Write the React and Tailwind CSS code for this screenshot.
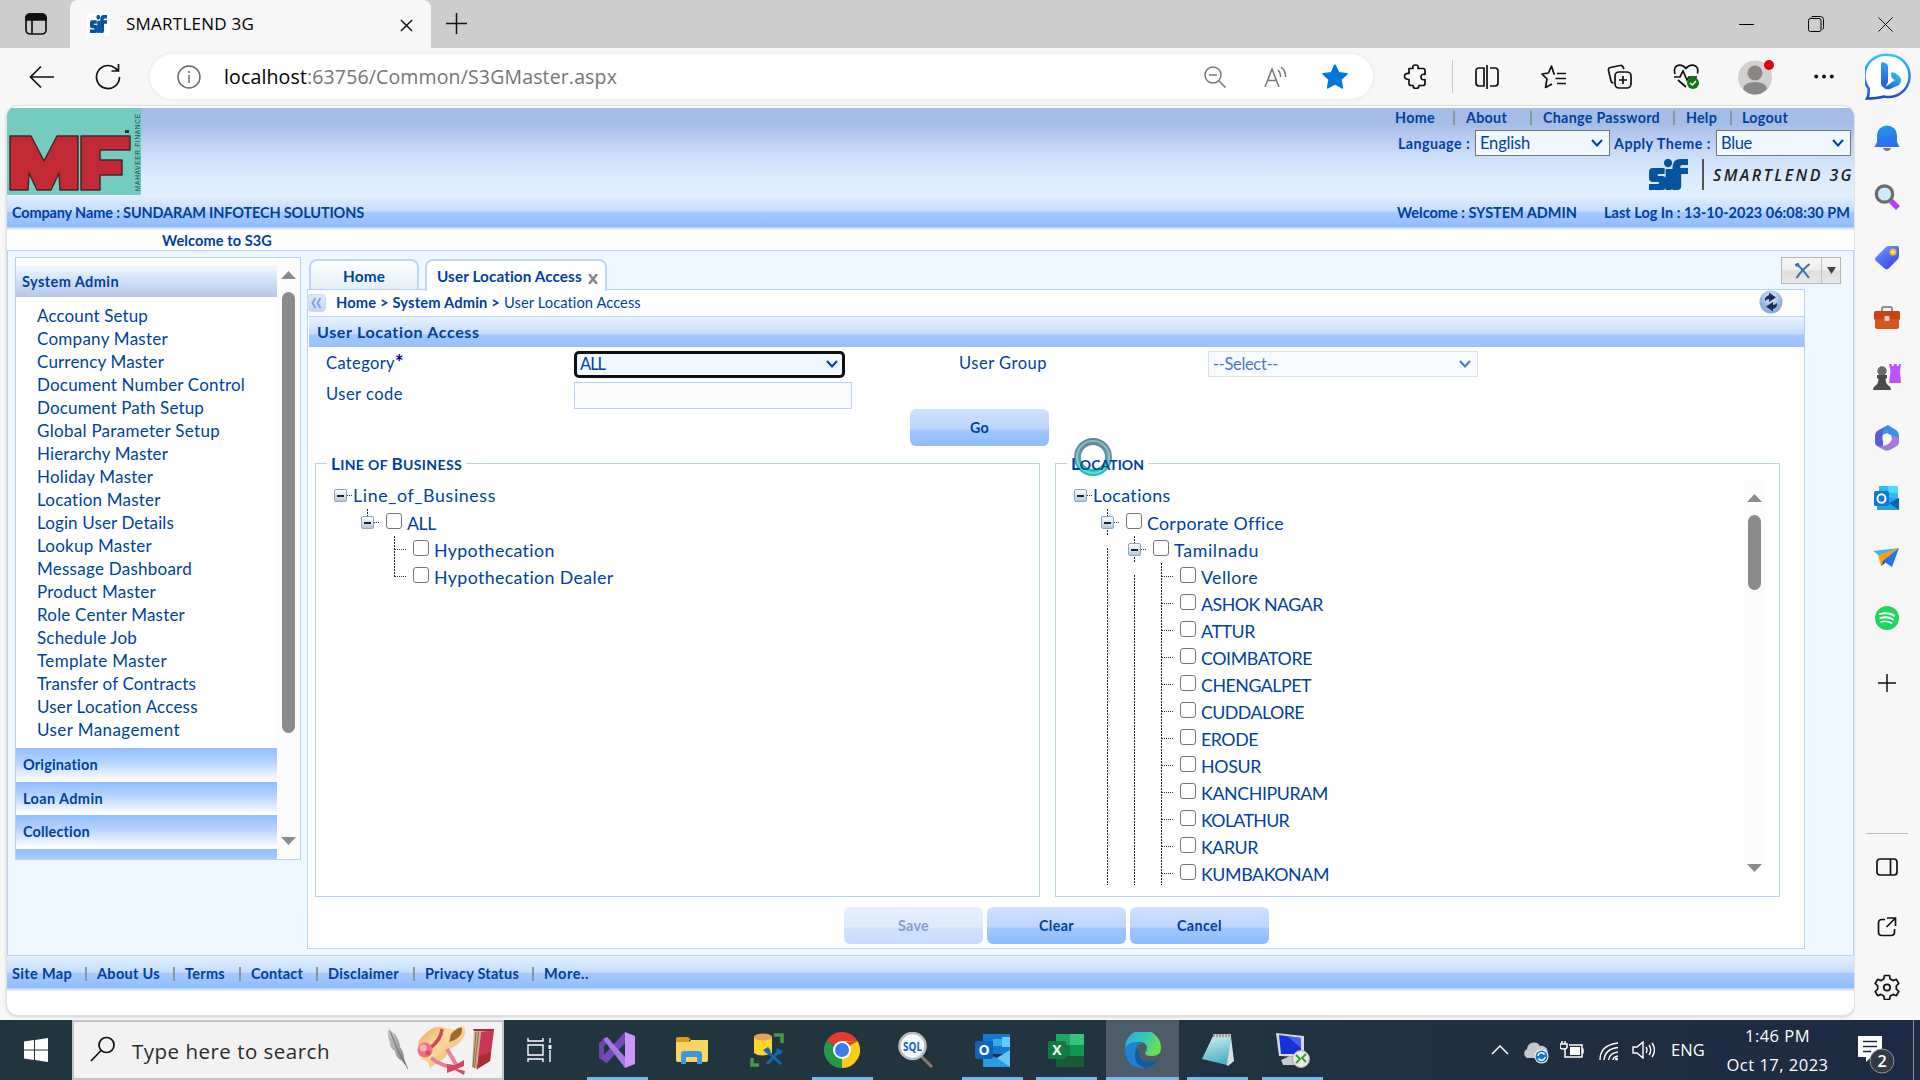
import React, { useLayoutEffect, useRef, useState } from "react";

/* Text run that is tracked so that it fills a given width. */
function T({ w, className = "", children }) {
  const ref = useRef(null);
  const [ls, setLs] = useState(0);
  useLayoutEffect(() => {
    const el = ref.current;
    const n = el.textContent.length;
    setLs((w - el.getBoundingClientRect().width) / n);
  }, []);
  return (
    <span className={`block shrink-0 whitespace-pre ${className}`} style={{ width: w }}>
      <span ref={ref} style={{ letterSpacing: ls }}>{children}</span>
    </span>
  );
}

const bar = "bg-[linear-gradient(#e3efff_0%,#c4dcfd_46%,#a6c9ff_50%,#90bdff_90%,#e6f0ff_97%)]";
const btn = "bg-[linear-gradient(#cfe1ff_0%,#bdd6fc_54%,#a3c7fe_57%,#8dbcff_100%)]";

/* ---------- browser chrome ---------- */
function SfMark({ className }) {
  return (
    <svg viewBox="0 0 40 31" className={className} preserveAspectRatio="none" fill="#05539f">
      <path d="M4 9h12v6H9v2h4q5 0 5 5v4q0 5-5 5H0v-6h10v-2H4q-4 0-4-4v-6q0-4 4-4z" />
      <path d="M17 10h8v17q0 4-4 4h-4z" />
      <circle cx="19.500" cy="4" r="4.200" />
      <path d="M24 9q0-9 8-9h8v6h-6q-2 0-2 2v1h8v6h-7v12q0 4-4 4h-5z" />
    </svg>
  );
}

function TabStrip() {
  return (
    <div className="flex h-[48px] bg-[#cdcdcd] text-black">
      <div className="flex w-[70px] items-center pl-[25px]">
        <svg width="22" height="22" viewBox="0 0 22 22" fill="none" stroke="#111" strokeWidth="1.700">
          <rect x="1" y="1" width="20" height="20" rx="4" />
          <path d="M1 7V5a4 4 0 0 1 4-4h12a4 4 0 0 1 4 4v2z" fill="#111" />
          <path d="M7 7v14" />
        </svg>
      </div>
      <div className="flex h-[48px] w-[361px] items-center rounded-t-[8px] bg-[#f7f7f7] pl-[17px]">
        <div className="flex h-[23px] w-[23px] items-center justify-center bg-white">
          <SfMark className="h-[18px] w-[17px]" />
        </div>
        <T w={128} className="ml-[16px] font-['Open_Sans'] text-[17px]">SMARTLEND 3G</T>
        <svg className="ml-[146px] mt-[2px]" width="13" height="13" viewBox="0 0 14 14" stroke="#111" strokeWidth="1.600"><path d="M1 1l12 12M13 1L1 13" /></svg>
      </div>
      <svg className="ml-[15px] mt-[13px]" width="21" height="21" viewBox="0 0 21 21" stroke="#111" strokeWidth="1.500"><path d="M10.500 0v21M0 10.500h21" /></svg>
      <div className="ml-auto mr-[27px] flex items-center gap-[54px]">
        <svg width="15" height="16" viewBox="0 0 15 16" stroke="#000"><path d="M0 8.500h15" /></svg>
        <svg width="16" height="16" viewBox="0 0 16 16" fill="none" stroke="#000"><rect x=".5" y="2.500" width="12.500" height="13" rx="2" /><path d="M3 1.500q.5-1 2-1h7.500q3 0 3 3v8q0 1.500-1 2" /></svg>
        <svg width="15" height="15" viewBox="0 0 16 16" stroke="#000"><path d="M.5.5l15 15M15.500.5l-15 15" /></svg>
      </div>
    </div>
  );
}

function Toolbar() {
  return (
    <div className="flex h-[57px] items-start bg-[#f7f7f7] pt-[6px]">
      <div className="flex h-[45px] w-[150px] items-center pl-[29px]">
        <svg width="26" height="24" viewBox="0 0 26 24" fill="none" stroke="#111" strokeWidth="1.700"><path d="M25 12H1.500M12 1.500L1.500 12L12 22.500" /></svg>
        <svg className="ml-[40px]" width="26" height="26" viewBox="0 0 26 26" fill="none" stroke="#111" strokeWidth="1.700"><path d="M24.500 13a11.500 11.500 0 1 1-4-8.700L23 6.500M23.500 0v7h-7" /></svg>
      </div>
      <div className="flex h-[45px] w-[1223px] items-center rounded-full bg-white pl-[27px] shadow-[0_0_4px_rgba(0,0,0,0.08)]">
        <svg width="24" height="24" viewBox="0 0 24 24" fill="none" stroke="#6b6b6b" strokeWidth="1.500"><circle cx="12" cy="12" r="11" /><path d="M12 10v8M12 6v2" /></svg>
        <div className="ml-[23px] flex font-['Open_Sans'] text-[19.500px]">
          <T w={83} className="text-black">localhost</T>
          <T w={310} className="text-[#757575]">:63756/Common/S3GMaster.aspx</T>
        </div>
        <svg className="ml-[587px]" width="22" height="22" viewBox="0 0 22 22" fill="none" stroke="#757575" strokeWidth="1.500"><circle cx="9" cy="9" r="8" /><path d="M15 15l6.500 6.500M5 9h8" /></svg>
        <svg className="ml-[38px]" width="24" height="22" viewBox="0 0 24 22" fill="none" stroke="#757575" strokeWidth="1.500"><path d="M1 21L8 3l7 18M3.500 14.500h9M14 4q3 3 2.500 7M17 1q5 4 4.500 10" /></svg>
        <svg className="ml-[34px]" width="26" height="25" viewBox="0 0 24 23" fill="#0078d7" stroke="#0078d7" strokeWidth="1.500" strokeLinejoin="round"><path d="M12 1l3.300 7 7.700 1-5.600 5.300L18.800 22 12 18.300 5.200 22l1.400-7.700L1 9l7.700-1z" /></svg>
      </div>
      <div className="flex h-[45px] items-center pl-[30px]">
        <svg width="24" height="25" viewBox="0 0 24 25" fill="none" stroke="#111" strokeWidth="1.700" strokeLinejoin="round"><path d="M6 4.500h4q-1-3.500 2.500-3.500t2.500 3.500h5q2 0 2 2v4q-4-1-4 2.500t4 2.500v4q0 2-2 2h-4q0 3-3 3t-3-3H8q-2 0-2-2v-4q-4.500 0-4.500-3.200T6 9.500z" /></svg>
        <div className="ml-[25px] h-[33px] w-px bg-[#c8c8c8]" />
        <svg className="ml-[22px]" width="24" height="24" viewBox="0 0 24 24" fill="none" stroke="#111" strokeWidth="1.700"><path d="M9 3H4Q1 3 1 6v12q0 3 3 3h5zM15 3h5q3 0 3 3v12q0 3-3 3h-5M12 0v24" /></svg>
        <svg className="ml-[42px]" width="25" height="24" viewBox="0 0 25 24" fill="none" stroke="#111" strokeWidth="1.700" strokeLinejoin="round"><path d="M14 9h-1L10.500 1 7.500 8 1 9l5 5-1.500 8.500L11 19M16 8.500h9M14.500 13.500H25M16 18.500h9" /></svg>
        <svg className="ml-[41px]" width="25" height="25" viewBox="0 0 25 25" fill="none" stroke="#111" strokeWidth="1.700"><rect x="8" y="8" width="16" height="16" rx="4" /><path d="M16 12v8M12 16h8M17 5l-1-2q-1-2-3-1.500L3.500 3.500Q1 4 1.500 6.500L4 17q.5 2 2.500 2" /></svg>
        <svg className="ml-[41px]" width="26" height="25" viewBox="0 0 26 25" fill="none" stroke="#111" strokeWidth="1.700"><path d="M2 10Q0 2 6 1.200 10 .7 13 4.500 16 .7 20 1.200q6 .8 4.500 8.300M1 13h6l3-6 4 9 2-3h8M5 16l8 7" /><circle cx="20" cy="19" r="6" fill="#0e7a0d" stroke="none" /><path d="M17 19l2.500 2 3.500-4" stroke="#fff" strokeWidth="1.500" /></svg>
        <svg className="ml-[39px]" width="36" height="36" viewBox="0 0 36 36"><circle cx="17" cy="18.500" r="17" fill="#d2d0ce" /><circle cx="17" cy="14" r="7.500" fill="#8a8886" /><path d="M5 30q1-7 12-7t12 7q-5 5.500-12 5.500T5 30z" fill="#8a8886" /><circle cx="31" cy="6" r="5" fill="#e3000b" /></svg>
        <svg className="ml-[40px]" width="20" height="5" viewBox="0 0 20 5" fill="#111"><circle cx="2.200" cy="2.500" r="2" /><circle cx="10" cy="2.500" r="2" /><circle cx="17.800" cy="2.500" r="2" /></svg>
      </div>
    </div>
  );
}

/* ---------- Edge sidebar ---------- */
function EdgeRail() {
  const slot = "flex h-[60px] items-center justify-center shrink-0";
  return (
    <div className="flex w-[65px] flex-col bg-[#f7f7f7] pr-[2px]">
      <div className="h-[3px] shrink-0" />
      <div className={slot}>
        <svg width="26" height="30" viewBox="0 0 26 30"><defs><linearGradient id="bell" x2=".3" y2="1"><stop stopColor="#1b9de0" /><stop offset="1" stopColor="#2f6df6" /></linearGradient></defs><path d="M3 19V12a10 9.500 0 0 1 20 0v7l2.500 5H.5z" fill="url(#bell)" /><path d="M9 25h8q-1 3-4 3t-4-3z" fill="#767676" /></svg>
      </div>
      <div className={slot}>
        <svg width="26" height="26" viewBox="0 0 26 26" className="-mt-[2px]"><path d="M17 17l7 7" stroke="#b83df5" strokeWidth="5.500" /><circle cx="10.500" cy="10" r="8.200" fill="#cfeafc" stroke="#6b6b6b" strokeWidth="3.200" /></svg>
      </div>
      <div className={slot}>
        <svg width="26" height="26" viewBox="0 0 26 26"><defs><linearGradient id="tag" x2=".8" y2="1"><stop stopColor="#6fa3ff" /><stop offset="1" stopColor="#3a3fe8" /></linearGradient></defs><path d="M12 2q1-1 3-1h8q2 0 2 2v7q0 2-1 4L14 24q-2 1-4-1L2 16q-2-2 0-4z" fill="url(#tag)" /><circle cx="19" cy="7" r="2.500" fill="#e8e8ff" stroke="#f5c400" strokeWidth="2" /></svg>
      </div>
      <div className={slot}>
        <svg width="28" height="24" viewBox="0 0 28 24"><path d="M9 6V3q0-2 2-2h6q2 0 2 2v3" fill="none" stroke="#8c8c8c" strokeWidth="2" /><rect x="1" y="5" width="26" height="9" rx="1.500" fill="#c9420f" /><path d="M2 13h24v8q0 2-2 2H4q-2 0-2-2z" fill="#d9531c" /><rect x="11.500" y="10" width="5" height="5" rx="1" fill="#d4d4d4" /></svg>
      </div>
      <div className={slot}>
        <svg width="28" height="28" viewBox="0 0 28 28" className="-mt-[2px]"><path d="M16 1h2.800v2h2V1h3v2h2V1H28l-1 7 1 12H16l1.500-12z" fill="#bb55fa" /><circle cx="9" cy="8" r="4.700" fill="#6a6a6a" /><path d="M4 12h10v3l-1.500 1q0 5 3.500 7 2 1 2 4H0q0-3 2-4 3.500-2 3.500-7L4 15z" fill="#4a4a4a" /></svg>
      </div>
      <div className={slot}>
        <svg width="26" height="28" viewBox="0 0 26 28"><path d="M14 1L4 6.500Q1 8.500 1 12v6q0 3 3 4.500l5 2.500V9z" fill="#5b5fd6" /><path d="M14 1l8 5q3 2 3 5v7l-9-5-7-3q-1-5 5-9z" fill="#3d8fea" /><path d="M25 14v4q0 3-3 4.500l-6 3.500q-3 1.500-6 0l-6-3.500q8 0 12-4l3-7z" fill="#a67cda" /><path d="M13 9l4.500 2.500v5L13 19l-4.500-2.500v-5z" fill="#f7f7f7" /></svg>
      </div>
      <div className={slot}>
        <OutlookFlat />
      </div>
      <div className={slot}>
        <svg width="27" height="20" viewBox="0 0 27 20"><path d="M0 3L26 0 8 9z" fill="#3cb6f2" /><path d="M26 0L8 9l1 4 4 2 6 4z" fill="#2275e6" /><path d="M26 0L5 7l3 11 3-6z" fill="#f5a21b" /><path d="M11 12l-3 6 4-3z" fill="#103f91" /></svg>
      </div>
      <div className={slot}>
        <svg width="24" height="24" viewBox="0 0 24 24"><circle cx="12" cy="12" r="12" fill="#1ed760" /><g fill="none" stroke="#fff" strokeLinecap="round"><path d="M5 8q8-2 14 1.500" strokeWidth="2.200" /><path d="M5.500 12q7-2 12.500 1.500" strokeWidth="1.900" /><path d="M6 15.700q6-1.500 10.500 1.500" strokeWidth="1.600" /></g></svg>
      </div>
      <div className="flex h-[70px] shrink-0 items-center justify-center">
        <svg width="18" height="18" viewBox="0 0 18 18" stroke="#111" strokeWidth="1.500"><path d="M9 0v18M0 9h18" /></svg>
      </div>
      <div className="mx-auto mt-[115px] h-px w-[42px] shrink-0 bg-[#bdbdbd]" />
      <div className="mt-[3px] flex h-[60px] shrink-0 items-center justify-center">
        <svg width="22" height="18" viewBox="0 0 22 18" fill="none" stroke="#111" strokeWidth="1.700"><rect x="1" y="1" width="20" height="16" rx="3" /><path d="M14.500 1v16" /></svg>
      </div>
      <div className={slot}>
        <svg width="20" height="20" viewBox="0 0 20 20" fill="none" stroke="#111" strokeWidth="1.700"><path d="M8 2.500H5Q1.500 2.500 1.500 6v9q0 3.500 3.500 3.500h9q3.500 0 3.500-3.500v-3M10 1h8.500v8M18.500 1L9.500 10" /></svg>
      </div>
      <div className={slot}>
        <svg width="26" height="26" viewBox="0 0 26 26" className="-mt-[1px]" fill="none" stroke="#111" strokeWidth="1.700" strokeLinejoin="round"><path d="M10.500 1.500h5l.7 3.500 2.800 1.600 3.400-1.300 2.400 4.200-2.500 2.400v3.200l2.500 2.400-2.400 4.200-3.400-1.300-2.800 1.600-.7 3.500h-5L9.800 22 7 20.400l-3.400 1.300-2.400-4.200 2.500-2.400v-3.200L1.200 9.500l2.400-4.200L7 6.600 9.800 5z" /><circle cx="13" cy="13.500" r="3.200" /></svg>
      </div>
    </div>
  );
}

function OutlookFlat() {
  return (
    <svg width="25" height="24" viewBox="0 0 25 24"><rect x="5" y="0" width="19" height="14" fill="#35b8f1" /><path d="M14 0h10v7H14z" fill="#50d9ff" /><path d="M3 12h22v12H3z" fill="#2a9fe4" /><path d="M15 17l10-5v12z" fill="#0a63b6" /><rect x="0" y="5" width="15" height="15" rx="1.500" fill="#0f78d4" /><ellipse cx="7.500" cy="12.500" rx="4" ry="4.300" fill="none" stroke="#fff" strokeWidth="2" /></svg>
  );
}

function BingBadge() {
  return (
    <svg width="46" height="48" viewBox="0 0 46 48" className="absolute right-[9px] top-[53px]">
      <defs>
        <linearGradient id="ring" x2="0" y2="1"><stop stopColor="#35c6f3" /><stop offset="1" stopColor="#1f49d8" /></linearGradient>
        <linearGradient id="bb" x1="1" y1="0" x2="0" y2="1"><stop stopColor="#37d1df" /><stop offset="1" stopColor="#1d4fd7" /></linearGradient>
        <linearGradient id="bs" x2="0" y2="1"><stop stopColor="#2fa6f2" /><stop offset="1" stopColor="#2057dd" /></linearGradient>
      </defs>
      <path d="M23 2a21 21 0 1 1-4 41.500Q12 45.500 2 45.500q2-3 1.700-10A21 21 0 0 1 23 2z" fill="#fff" stroke="url(#ring)" strokeWidth="2.500" />
      <path d="M16 11q0-3 3-1.500l2 1q2 1 2 3V29l-3 6q-4-1-4-5z" fill="url(#bs)" />
      <path d="M26 21q0-3 4-1l3 2q4 3 3 7-1 3-4 4l-7 3q-4 1-6-1l8-6 3-2-2-1q-2-2-2-5z" fill="url(#bb)" />
    </svg>
  );
}

/* ---------- application ---------- */
const Sep = ({ className }) => <div className={`h-[14px] w-[2px] shrink-0 bg-[#8f949c] ${className}`} />;

const Chevron = ({ className }) => (
  <svg width="12" height="8" viewBox="0 0 12 8" fill="none" stroke="currentColor" strokeWidth="2" className={className}><path d="M1 1l5 5.500L11 1" /></svg>
);

function Header() {
  return (
    <div className="flex h-[87px] shrink-0 justify-between bg-[linear-gradient(#a3bbe5_0%,#a5bde7_18%,#bdd1f2_40%,#cfe2fb_60%,#dcecfe_80%,#deeefe_100%)]">
      <div className="flex h-[87px] w-[134px] bg-[#74cbc0]">
        <svg width="134" height="87" viewBox="0 0 134 87">
          <g fill="#c12a35" stroke="#4b2226" strokeWidth="1.500" strokeLinejoin="round">
            <path d="M3 28h21l13 25 13-25h21v54H53l-1-17-8 17H30l-8-17-1 17H3z" />
            <path d="M74 28h49v14H93v10h22v15H93v15H74z" />
          </g>
          <path d="M118 22h4v3h-4z" fill="#234" />
          <text transform="translate(133 83) rotate(-90)" fontSize="6.500" fill="#23524d" fontFamily="Liberation Sans" textLength="77">MAHAVEER FINANCE</text>
        </svg>
      </div>
      <div className="flex w-[465px] flex-col text-[14.300px] font-bold text-[#003f9d]">
        <div className="flex h-[20px] items-center pl-[6px]">
          <T w={40}>Home</T><Sep className="ml-[18px] mr-[11px]" />
          <T w={41}>About</T><Sep className="ml-[23px] mr-[11px]" />
          <T w={117}>Change Password</T><Sep className="ml-[13px] mr-[11px]" />
          <T w={31}>Help</T><Sep className="ml-[13px] mr-[10px]" />
          <T w={46}>Logout</T>
        </div>
        <div className="mt-[2px] flex h-[26px] items-center pl-[9px]">
          <T w={72} className="mt-[1px]">Language :</T>
          <Select w="w-[135px]" label="English" lw={50} className="ml-[5px] border-[#767676] bg-[#eff7ff]" />
          <T w={97} className="ml-[4px] mt-[1px]">Apply Theme :</T>
          <Select w="w-[135px]" label="Blue" lw={31} className="ml-[5px] border-[#767676] bg-[#eff7ff]" />
        </div>
        <div className="mt-[3px] flex h-[31px] items-center pl-[260px]">
          <SfMark className="h-[31px] w-[40px]" />
          <div className="ml-[14px] h-[31px] w-[2px] bg-[#555]" />
          <T w={141} className="ml-[9px] mt-[1px] font-['Open_Sans'] text-[16px] font-semibold italic text-[#222]">SMARTLEND 3G</T>
        </div>
      </div>
    </div>
  );
}

function Select({ w, label, lw, className }) {
  return (
    <div className={`flex h-[26px] shrink-0 items-center justify-between border pl-[4px] pr-[6px] text-[16.500px] font-normal text-[#003f9d] ${w} ${className}`}>
      <T w={lw} className="mt-px">{label}</T>
      <Chevron />
    </div>
  );
}

const MENU = [
  ["Account Setup", 111], ["Company Master", 131], ["Currency Master", 127], ["Document Number Control", 208],
  ["Document Path Setup", 167], ["Global Parameter Setup", 183], ["Hierarchy Master", 131], ["Holiday Master", 116],
  ["Location Master", 124], ["Login User Details", 137], ["Lookup Master", 115], ["Message Dashboard", 155],
  ["Product Master", 119], ["Role Center Master", 148], ["Schedule Job", 100], ["Template Master", 130],
  ["Transfer of Contracts", 159], ["User Location Access", 161], ["User Management", 143],
];

const Tri = ({ down, className = "" }) => (
  <svg width="15" height="8" viewBox="0 0 15 8" fill="#8b8b8b" className={`shrink-0 ${className}`}><path d={down ? "M0 0h15l-7.500 8z" : "M0 8h15L7.500 0z"} /></svg>
);

function SideMenu() {
  const acc = "flex items-center bg-[linear-gradient(#90beff,#b4d2ff_40%,#fdfeff_95%)] pl-[7px] text-[14.500px] font-bold";
  return (
    <div className="ml-[7px] mt-[6px] flex h-[603px] w-[286px] overflow-hidden border border-[#b6d1ff] bg-white text-[#003f9d]">
      <div className="w-[261px]">
        <div className="mt-[7px] flex h-[32px] items-center bg-[linear-gradient(#f4f9ff,#d6e5fb_40%,#b3c8ea)] pl-[6px] pt-[2px] text-[14.500px] font-bold"><T w={97}>System Admin</T></div>
        <div className="h-[451px] pl-[21px] pt-[7px] text-[17px]">
          {MENU.map(([t, w]) => <div key={t} className="flex h-[23px] items-center"><T w={w}>{t}</T></div>)}
        </div>
        <div className={`h-[34px] ${acc}`}><T w={75}>Origination</T></div>
        <div className={`h-[33px] ${acc}`}><T w={80}>Loan Admin</T></div>
        <div className={`h-[34px] ${acc}`}><T w={67}>Collection</T></div>
        <div className={`h-[34px] ${acc}`} />
      </div>
      <div className="flex w-[23px] flex-col items-center bg-[#fcfcfc] pt-[13px]">
        <Tri />
        <div className="mt-[13px] h-[441px] w-[13px] shrink-0 rounded-full bg-[#8b8b8b]" />
        <Tri down className="mt-[104px]" />
      </div>
    </div>
  );
}

/* One 27px square of the tree's gutter. */
function Cell({ kind }) {
  const v = "absolute left-[13px] w-px bg-[repeating-linear-gradient(#222_0_2px,transparent_2px_3px)]";
  const h = "absolute h-px bg-[repeating-linear-gradient(90deg,#333_0_1px,transparent_1px_2px)]";
  return (
    <div className="relative h-[27px] w-[27px] shrink-0">
      {kind === "line" && <i className={`${v} bottom-0 top-0`} />}
      {kind === "lower" && <i className={`${v} bottom-0 top-[12px]`} />}
      {kind === "tee" && <><i className={`${v} bottom-0 top-0`} /><i className={`${h} left-[14px] right-[2px] top-[13px]`} /></>}
      {kind === "corner" && <><i className={`${v} bottom-[13px] top-0`} /><i className={`${h} left-[14px] right-[2px] top-[13px]`} /></>}
      {kind === "openEnd" && <i className={`${v} bottom-[13px] top-0`} />}
      {kind === "openLine" && <i className={`${v} bottom-0 top-0`} />}
      {kind && kind.startsWith("open") && (
        <>
          <i className={`${h} left-[20px] right-[1px] top-[13px]`} />
          <b className="absolute left-[7px] top-[7px] flex h-[13px] w-[13px] items-center justify-center rounded-[2px] border border-[#7fa9cf] bg-[linear-gradient(#fff,#b9c8d6)]">
            <i className="h-[2px] w-[7px] bg-[#222]" />
          </b>
        </>
      )}
    </div>
  );
}

function Row({ cells, label, w, check = true }) {
  return (
    <div className="flex h-[27px] shrink-0 items-center">
      {cells.map((k, i) => <Cell key={i} kind={k} />)}
      {check && <div className="-mt-[4px] ml-[5px] mr-[5px] h-[16px] w-[16px] shrink-0 rounded-[3px] border-[1.500px] border-[#767676] bg-white" />}
      <T w={w} className={check ? "mt-[2px]" : "-ml-px"}>{label}</T>
    </div>
  );
}

const PLACES = [
  ["Vellore", 57], ["ASHOK NAGAR", 122], ["ATTUR", 54], ["COIMBATORE", 111], ["CHENGALPET", 110], ["CUDDALORE", 103],
  ["ERODE", 57], ["HOSUR", 60], ["KANCHIPURAM", 127], ["KOLATHUR", 88], ["KARUR", 57], ["KUMBAKONAM", 128],
];

function Button({ label, w, off, className = "" }) {
  return (
    <div className={`flex h-[37px] w-[139px] shrink-0 items-center justify-center rounded-[6px] pt-px text-[14.300px] font-bold ${off ? "opacity-50" : ""} ${btn} ${className}`}>
      <T w={w}>{label}</T>
    </div>
  );
}

function Panel({ legend, children }) {
  return (
    <div className="relative h-[434px] w-[725px] border border-[#b6d1ff]">
      <div className="absolute left-[11px] top-[-12px] flex h-[24px] items-center bg-white px-[4px] text-[14px] font-bold leading-[24px]">{legend}</div>
      {children}
    </div>
  );
}

const Cap = ({ children }) => <span className="text-[17px]">{children}</span>;

function Workspace() {
  return (
    <div className="ml-[6px] w-[1498px]">
      <div className="flex h-[38px] items-end pl-[2px] text-[15.300px] font-bold">
        <div className="flex h-[30px] w-[110px] items-center justify-center rounded-t-[8px] border-2 border-b-0 border-[#bcd5fb] bg-[linear-gradient(#fdfeff,#e3f0f6)] pt-[3px]"><T w={42}>Home</T></div>
        <div className="relative z-10 -mb-[2px] ml-[6px] flex h-[32px] w-[182px] items-center rounded-t-[8px] border-2 border-b-0 border-[#bcd5fb] bg-white pl-[10px] pt-[1px]">
          <T w={145}>User Location Access</T>
          <svg className="ml-[6px] mt-[4px]" width="10" height="10" viewBox="0 0 10 10" stroke="#858585" strokeWidth="2.500"><path d="M1 0l8 10M9 0L1 10" /></svg>
        </div>
      </div>
      <div className="h-[660px] w-[1498px] border border-[#b6d1ff] bg-white">
        <div className="flex h-[26px] items-center text-[14.700px]">
          <div className="-ml-px flex h-[18px] w-[19px] shrink-0 items-center justify-center rounded-[4px] border border-[#c9dbfb] bg-[linear-gradient(#dfeafd,#c3d6fb)] text-[#7f9fdc]">
            <svg width="11" height="12" viewBox="0 0 11 12" fill="none" stroke="currentColor" strokeWidth="1.800"><path d="M4.500 1L1.500 6l3 5M9.500 1l-3 5 3 5" /></svg>
          </div>
          <T w={164} className="-mt-px ml-[10px] font-bold">{"Home > System Admin >"}</T>
          <T w={137} className="-mt-px ml-[4px]">User Location Access</T>
          <svg className="-mt-[2px] ml-[1118px] shrink-0" width="24" height="24" viewBox="0 0 24 24"><defs><radialGradient id="rf" cy=".3"><stop stopColor="#e6eefa" /><stop offset="1" stopColor="#8fafd9" /></radialGradient></defs><circle cx="12" cy="12" r="11.500" fill="url(#rf)" /><g fill="#15305e"><path d="M6 11q-1-4 4-6V2.500l7 5-7 4.500V9q-2 0-4 2z" /><path d="M18 13q1 4-4 6v2.500l-7-5 7-4.500v3q2 0 4-2z" /></g></svg>
        </div>
        <div className="ml-px flex h-[31px] items-center border-t border-[#b6d1ff] bg-[linear-gradient(#eaf3ff_0%,#c4dcfd_56%,#a3c7fe_60%,#96c0fe_100%)] pl-[8px] text-[16px] font-bold"><T w={163}>User Location Access</T></div>
        <div className="flex h-[30px] items-center pl-[18px] pt-[4px] text-[16.500px]">
          <T w={69} className="-mt-[2px]">Category</T>
          <span className="-mt-[4px] w-[9px] text-[20px] leading-[20px] font-bold text-[#00007f]">*</span>
          <div className="ml-[170px] flex h-[27px] w-[271px] items-center justify-between rounded-[5px] border-[3px] border-[#101010] bg-[#eff7ff] pl-[3px] pr-[4px]"><T w={25}>ALL</T><Chevron /></div>
          <T w={88} className="-mt-[2px] ml-[114px]">User Group</T>
          <Select w="w-[270px]" label="--Select--" lw={65} className="ml-[161px] border-[#cfd3d8] bg-[#f4f9ff] opacity-70" />
        </div>
        <div className="flex h-[32px] items-center pl-[18px] pt-[5px] text-[16.500px]">
          <T w={77} className="-mt-[2px]">User code</T>
          <div className="ml-[171px] h-[27px] w-[278px] border border-[#b6d1ff] bg-[#fafafa]" />
        </div>
        <Button label="Go" w={19} className="ml-[602px]" />
        <div className="mt-[17px] flex gap-[15px] pl-[7px]">
          <Panel legend={<T w={131}><Cap>L</Cap>INE OF <Cap>B</Cap>USINESS</T>}>
            <div className="flex flex-col pl-[11px] pt-[18px] text-[17.800px]">
              <Row cells={["open"]} label="Line_of_Business" w={143} check={false} />
              <Row cells={[null, "openEnd"]} label="ALL" w={29} />
              <Row cells={[null, null, "tee"]} label="Hypothecation" w={121} />
              <Row cells={[null, null, "corner"]} label="Hypothecation Dealer" w={180} />
            </div>
          </Panel>
          <Panel legend={
            <>
              <svg className="absolute left-[6px] top-[-15px]" width="40" height="40" viewBox="0 0 40 40" fill="none">
                <defs><linearGradient id="spin" x2="0" y2="1"><stop stopColor="#5b8694" /><stop offset=".5" stopColor="#5f9ea4" /><stop offset="1" stopColor="#16c4b8" /></linearGradient></defs>
                <circle cx="20" cy="20" r="15.500" stroke="url(#spin)" strokeWidth="7" />
                <circle cx="20" cy="20" r="16" stroke="#bcdfe6" strokeWidth="2" opacity=".55" />
              </svg>
              <T w={73} className="relative"><Cap>L</Cap>OCATION</T>
            </>
          }>
            <div className="flex justify-between pr-[14px] pt-[17px]">
              <div className="flex h-[404px] flex-col overflow-hidden pl-[11px] pt-px text-[17.800px]">
                <Row cells={["open"]} label="Locations" w={78} check={false} />
                <Row cells={[null, "openLine"]} label="Corporate Office" w={136} />
                <Row cells={[null, "lower", "openLine"]} label="Tamilnadu" w={85} />
                {PLACES.map(([t, w], i) => <Row key={t} cells={[null, "line", i ? "line" : "lower", "tee"]} label={t} w={w} />)}
              </div>
              <div className="flex h-[391px] w-[22px] flex-col items-center bg-[#fcfcfc] pt-[13px]">
                <Tri />
                <div className="mt-[13px] h-[75px] w-[13px] shrink-0 rounded-full bg-[#8b8b8b]" />
                <Tri down className="mt-[274px]" />
              </div>
            </div>
          </Panel>
        </div>
        <div className="mt-[10px] flex gap-[4px] pl-[536px]">
          <Button label="Save" w={31} off />
          <Button label="Clear" w={35} />
          <Button label="Cancel" w={45} />
        </div>
      </div>
    </div>
  );
}

const FOOT = [["Site Map", 60, "ml-[13px]"], ["About Us", 63, "ml-[13px]"], ["Terms", 40, "ml-[14px]"], ["Contact", 52, "ml-[13px]"], ["Disclaimer", 71, "ml-[14px]"], ["Privacy Status", 94, "ml-[13px]"], ["More..", 45, ""]];

function Page() {
  return (
    <div className="ml-[6px] flex h-[911px] w-[1849px] flex-col overflow-hidden rounded-[12px] border border-[#e2e2e2] bg-white pt-[2px] font-[Lato] text-[#003f9d] shadow-[0_1px_3px_rgba(0,0,0,0.15)]">
      <Header />
      <div className={`flex h-[35px] shrink-0 items-center justify-between pl-[5px] pr-[4px] pt-px text-[14.500px] font-bold ${bar}`}>
        <T w={352}>Company Name : SUNDARAM INFOTECH SOLUTIONS</T>
        <div className="flex">
          <T w={180}>Welcome : SYSTEM ADMIN</T>
          <T w={246} className="ml-[27px]">Last Log In : 13-10-2023 06:08:30 PM</T>
        </div>
      </div>
      <div className="flex h-[20px] shrink-0 items-center pl-[155px] pt-[2px] text-[14.500px] font-bold"><T w={110}>Welcome to S3G</T></div>
      <div className="flex h-[706px] shrink-0 border border-[#b6d1ff] bg-[#eff7ff]">
        <SideMenu />
        <Workspace />
        <div className="-ml-[24px] mt-[6px] flex h-[27px] w-[60px] border border-[#b4b4b4] bg-[linear-gradient(#f6f6f6_0%,#f0f0f0_45%,#dedede_55%,#e8e8e8_100%)]">
          <div className="flex w-[40px] items-center justify-center border-r border-[#c0c0c0] pl-[2px]">
            <svg width="16" height="16" viewBox="0 0 16 16" fill="none" stroke="#3b6ea5" strokeWidth="2"><path d="M2 1.500q5 4 12 13.500M14.500 1Q6 8 1.500 15" /><path d="M.5 2.500L4 1" strokeWidth="3" /></svg>
          </div>
          <div className="flex flex-1 items-center justify-center"><svg width="9" height="7" viewBox="0 0 9 7" fill="#444"><path d="M0 0h9L4.500 7z" /></svg></div>
        </div>
      </div>
      <div className={`flex h-[35px] shrink-0 items-center pl-[5px] pt-px text-[14.500px] font-bold ${bar}`}>
        {FOOT.map(([t, w, m]) => <React.Fragment key={t}><T w={w}>{t}</T>{m && <Sep className={`mr-[10px] ${m}`} />}</React.Fragment>)}
      </div>
    </div>
  );
}

/* ---------- taskbar ---------- */
function Task({ children, on, active, w = "w-[75px]" }) {
  return (
    <div className={`flex h-[60px] shrink-0 flex-col items-center ${w}`}>
      <div className={`flex h-[57px] items-center justify-center pt-[3px] ${active ? "w-[73px] bg-[#4d5c68]" : "w-[61px]"}`}>{children}</div>
      {on && <div className={`h-[3px] bg-[#76b9ed] ${active ? "w-[73px]" : "w-[61px]"}`} />}
    </div>
  );
}

function Taskbar() {
  return (
    <div className="flex h-[60px] bg-[linear-gradient(90deg,#20363f,#22353f_50%,#1d2a44)] font-['Open_Sans'] text-white">
      <div className="flex w-[72px] items-center pl-[24px]">
        <svg width="24" height="24" viewBox="0 0 24 24" fill="#fff"><path d="M0 3.500l10-1.400v9.400H0zM11 2l13-2v11.500H11zM0 12.500h10v9.400L0 20.500zM11 12.500h13V24l-13-2z" /></svg>
      </div>
      <div className="flex h-[60px] w-[432px] items-center border-2 border-[#c3c3c3] bg-[#f2f2f2] pl-[16px] pt-[2px] text-[#2b2b2b]">
        <svg width="26" height="26" viewBox="0 0 26 26" fill="none" stroke="#111" strokeWidth="1.700" className="-mt-[4px]"><circle cx="16.500" cy="9" r="7.500" /><path d="M11 14.500L1 25" /></svg>
        <T w={198} className="ml-[16px] text-[20.500px]">Type here to search</T>
        <svg className="-mt-[3px] ml-[55px]" width="112" height="52" viewBox="0 0 112 52">
          <defs>
            <linearGradient id="hat" x2="1" y2="1"><stop stopColor="#e0a04c" /><stop offset=".4" stopColor="#fbdda0" /><stop offset="1" stopColor="#e7a652" /></linearGradient>
            <linearGradient id="quill" x2="1" y2="1"><stop stopColor="#c9c9c9" /><stop offset="1" stopColor="#7d7d7d" /></linearGradient>
          </defs>
          <path d="M4 4q1 3 6 6 5 7 5 13 4 5 4 11l3 9-5-6q-6-3-7-10-6-4-5-9-4-7-1-14z" fill="url(#quill)" />
          <path d="M5 7q7 20 18 38" stroke="#666" strokeWidth=".8" fill="none" />
          <path d="M33 24q-1-8 7-14Q50 0 60 4q6 0 10 2 6-6 9-3 3 4-1 11-5 8-14 11-2 10-11 13l-8 6-2-6q-10-2-10-14z" fill="url(#hat)" />
          <path d="M66 10q8-8 11-6 1 10-13 14z" fill="#9c6a33" />
          <path d="M57 5q-1 11-12 19" fill="none" stroke="#c9475f" strokeWidth="3.500" />
          <path d="M62 25l10 17M46 34q12 9 26 10" fill="none" stroke="#ec7f99" strokeWidth="4" />
          <circle cx="40" cy="26" r="7.500" fill="#ee6f80" /><circle cx="38" cy="24" r="3.500" fill="#fbb0b6" /><circle cx="43" cy="29" r="2.500" fill="#d94b62" />
          <path d="M62 40l8 1 9-5v6l-7 3 8 2-1 4-9-5-8 3z" fill="#d7466a" />
          <path d="M89 5h20v3H96l-3 38-6-3z" fill="#c9b08a" />
          <path d="M91 8l-3 35M93.500 8l-4 36" stroke="#7b5a3c" strokeWidth=".8" />
          <path d="M88 5h21v2H89z" fill="#a12b45" />
          <path d="M96 8l13-2-4 31-13 8z" fill="#cb3556" />
          <path d="M94 32l12-4-1 9-13 8z" fill="#a8302f" />
        </svg>
      </div>
      <Task w="w-[71px]">
        <svg width="25" height="24" viewBox="0 0 25 24" fill="none" stroke="#fff" strokeWidth="1.400"><path d="M1 0v3h15V0M1 24v-3h15v3M1 7h15v10H1zM23 0v5M23 12v12" /><path d="M23 7v4" strokeWidth="3" /></svg>
      </Task>
      <Task on w="w-[84px]">
        <svg width="36" height="36" viewBox="0 0 36 36"><path d="M0 11l8-6 4 3-7 6v9l6 5-4 3-7-5z" fill="#6b45a8" /><path d="M26 0v11L8 31l-6-5z" fill="#7549b8" /><path d="M4 7l4-2 18 20v11z" fill="#a678e6" /><path d="M26 0l10 4v28l-10 4z" fill="#cb96fb" /></svg>
      </Task>
      <Task w="w-[66px]">
        <svg width="32" height="27" viewBox="0 0 32 27"><path d="M0 2q0-2 2-2h10l3 3h-2v5H0z" fill="#e09b13" /><path d="M0 5h13l2-2h17v20q0 2-2 2H2q-2 0-2-2z" fill="#fcd462" /><path d="M5 17q0-3 3-3h15q3 0 3 3v10h-5v-7H10v7H5z" fill="#3e97dc" /></svg>
      </Task>
      <Task w="w-[84px]">
        <svg width="34" height="34" viewBox="0 0 34 34"><path d="M24 2h8v8M9 32H2v-7" fill="none" stroke="#47984a" strokeWidth="3.500" /><path d="M4 4v16q7 5 18 0V4z" fill="#fbd630" /><ellipse cx="13" cy="4" rx="9" ry="3.500" fill="#e9a050" /><path d="M17 18l14 13M29 18L17 31" stroke="#1667ad" strokeWidth="3" /><path d="M13 17l5-3 3 4-4 3zM26 20l1-5 6 3-3 4z" fill="#1667ad" /></svg>
      </Task>
      <Task on w="w-[66px]">
        <svg width="36" height="36" viewBox="0 0 36 36"><path d="M18 18L2.400 9A18 18 0 0 1 33.600 9z" fill="#e33b2e" /><path d="M18 18L2.400 9A18 18 0 0 0 18 36z" fill="#219a49" /><path d="M18 18L33.600 9A18 18 0 0 1 18 36z" fill="#fccb13" /><path d="M18 9h15.600L18 10zM18 36l8-13.500z" fill="#fccb13" /><circle cx="18" cy="18" r="9" fill="#fff" /><circle cx="18" cy="18" r="7" fill="#3b7bea" /></svg>
      </Task>
      <Task w="w-[82px]">
        <svg width="36" height="36" viewBox="0 0 36 36"><path d="M23 24l11 11" stroke="#8b7b70" strokeWidth="3" /><circle cx="14.500" cy="14" r="13" fill="#f7fbff" stroke="#b9bcc0" strokeWidth="2.500" /><text x="14.500" y="19" fontSize="12" fontWeight="700" fill="#1462b5" textAnchor="middle" textLength="19" lengthAdjust="spacingAndGlyphs">SQL</text></svg>
      </Task>
      <Task on w="w-[70px]">
        <svg width="35" height="33" viewBox="0 0 35 33"><path d="M8 0h27v20H8z" fill="#1579cf" /><path d="M18 5h9v7h-9z" fill="#37a9ef" /><path d="M27 3h8v10h-8z" fill="#62cdfb" /><path d="M8 18l14 6 13-8v17H8z" fill="#2a9ae6" /><path d="M22 24l13-8v17z" fill="#68c6f5" /><rect x="0" y="7" width="18" height="18" rx="2" fill="#0f64b8" /><text x="9" y="21" fontSize="14" fontWeight="700" fill="#fff" textAnchor="middle">O</text></svg>
      </Task>
      <Task on w="w-[78px]">
        <svg width="36" height="33" viewBox="0 0 36 33"><path d="M8 0h28v33H8z" fill="#21a366" /><path d="M22 0h14v11H22z" fill="#33c481" /><path d="M8 11h14v11H8z" fill="#107c41" /><path d="M8 22h28v11H8z" fill="#185c37" /><path d="M22 11h14v11H22z" fill="#159353" /><rect x="0" y="7" width="18" height="18" rx="2" fill="#107c41" /><text x="9" y="21" fontSize="14" fontWeight="700" fill="#fff" textAnchor="middle">X</text></svg>
      </Task>
      <Task on active w="w-[75px]">
        <svg width="36" height="36" viewBox="0 0 36 36"><defs><linearGradient id="eg" x2="1" y2=".4"><stop stopColor="#2ba8e8" /><stop offset=".6" stopColor="#35c9b5" /><stop offset="1" stopColor="#6be04e" /></linearGradient></defs><path d="M0 16A18 18 0 0 1 36 16q0 8-9 8-7 0-7-3 2-2 2-5 0-6-8-6Q3 10 0 16z" fill="url(#eg)" /><path d="M0 17q3-7 11-7 3 0 6 1.500Q9 15 10 23q2 10 10 12.500Q17 36 16 36 1 35 0 17z" fill="#1b82d5" /><path d="M14 17q-2 12 10 13 5 0 9-3-4 8-13 9-10-3-10-12 0-5 4-7z" fill="#1259a8" /></svg>
      </Task>
      <Task on w="w-[75px]">
        <svg width="34" height="34" viewBox="0 0 34 34"><defs><linearGradient id="pad" x2=".3" y2="1"><stop stopColor="#d4f2f5" /><stop offset="1" stopColor="#4fb3c2" /></linearGradient></defs><path d="M30 4l3 24-6 5-4-3z" fill="#dedede" /><path d="M12 3l18 2-4 27L1 26z" fill="url(#pad)" /><path d="M12 1h18v4H12z" fill="#c9d3d6" /><path d="M13 1v3M16 1v3M19 1v3M22 1v3M25 1v3M28 1v3" stroke="#555" strokeWidth=".8" /></svg>
      </Task>
      <Task on w="w-[75px]">
        <svg width="36" height="36" viewBox="0 0 36 36"><path d="M1 1l28 3v21L4 24z" fill="#d5d8dc" /><path d="M4 3l22 3v16L6 22z" fill="#1531d8" /><path d="M12 4l14 2v10z" fill="#4a62f0" /><path d="M6 28l9-4 8 3-2 6H8z" fill="#c9ccd0" /><circle cx="26" cy="27" r="8.500" fill="#e9ebe9" stroke="#aaa" /><path d="M21 23l4 4-4 4M31 22l-4 4 4 4" fill="none" stroke="#38a030" strokeWidth="2" /></svg>
      </Task>
      <div className="ml-auto flex items-center">
        <svg width="18" height="10" viewBox="0 0 18 10" fill="none" stroke="#fff" strokeWidth="1.500"><path d="M1 9l8-8 8 8" /></svg>
        <svg className="ml-[14px] mt-[5px]" width="26" height="22" viewBox="0 0 26 22"><path d="M4 16a5 5 0 0 1 0-9 7 7 0 0 1 13-3 6 6 0 0 1 3 12z" fill="#c4c8cc" /><circle cx="18.500" cy="14.500" r="7" fill="#fff" /><circle cx="18.500" cy="14.500" r="6" fill="#1f74c4" /><path d="M15 14a3.500 3.500 0 0 1 6.500-1.500M22 15a3.500 3.500 0 0 1-6.500 1.500" stroke="#fff" strokeWidth="1.500" fill="none" /></svg>
        <svg className="ml-[11px]" width="24" height="18" viewBox="0 0 24 18" fill="none" stroke="#fff" strokeWidth="1.500"><path d="M9 4h13v12H5V8" /><path d="M10 6h10v8h-10z" fill="#fff" stroke="none" /><path d="M23 7.500v5M0 3h7v3q0 2-3.500 2T0 6zM2 0v3M5 0v3" /></svg>
        <svg className="ml-[15px] mt-[2px]" width="20" height="20" viewBox="0 0 20 20" fill="none" stroke="#fff" strokeWidth="1.400"><path d="M1 19Q1 4 19 2M5 19Q6 8 19 6.500M9.500 19q1-7 9.500-8M14 19q0-3 5-4" /><circle cx="17.500" cy="18" r="1.500" fill="#fff" stroke="none" /></svg>
        <svg className="ml-[13px]" width="23" height="18" viewBox="0 0 23 18" fill="none" stroke="#fff" strokeWidth="1.400"><path d="M1 6h4l6-5v16l-6-5H1zM14 6q2 3 0 6M17 4q3.500 5 0 10M20 2q5 7 0 14" /></svg>
        <T w={34} className="ml-[16px] text-[16.500px]">ENG</T>
        <div className="ml-[21px] flex w-[103px] flex-col items-center gap-[7px] text-[16.500px] leading-[22px]">
          <T w={65}>1:46 PM</T>
          <T w={102}>Oct 17, 2023</T>
        </div>
        <svg className="ml-[29px] mt-[10px]" width="37" height="38" viewBox="0 0 37 38"><path d="M0 0h24v21H13l-5 5v-5H0z" fill="#fff" /><path d="M5 5.500h14M5 10.500h14M5 15.500h8" stroke="#1d2a44" strokeWidth="1.500" /><circle cx="24" cy="25" r="12" fill="#343b45" stroke="#8c939b" /><text x="24" y="31" fontSize="16" fill="#fff" textAnchor="middle" fontWeight="600">2</text></svg>
        <div className="ml-[18px] mr-[6px] h-[60px] w-px bg-[#8b93a1]" />
      </div>
    </div>
  );
}

export default function App() {
  return (
    <div className="relative flex h-[1080px] w-[1920px] flex-col overflow-hidden bg-[#f7f7f7]">
      <TabStrip />
      <Toolbar />
      <div className="flex h-[915px]">
        <Page />
        <EdgeRail />
      </div>
      <Taskbar />
      <BingBadge />
    </div>
  );
}
